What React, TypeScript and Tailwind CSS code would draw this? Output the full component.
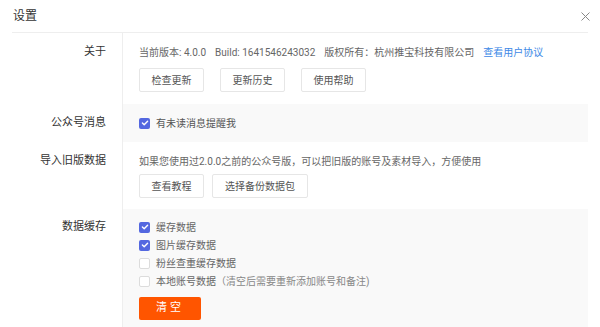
import React from "react";

const font = { fontFamily: "Roboto, 'Noto Sans CJK SC', sans-serif" };

function Check({ checked }: { checked?: boolean }) {
  return checked ? (
    <span className="flex h-[11px] w-[11px] items-center justify-center rounded-[2px] bg-[#5468e0]">
      <svg width="8" height="8" viewBox="0 0 8 8">
        <path d="M1.4 4.1 L3.2 5.8 L6.6 2.2" fill="none" stroke="white" strokeWidth="1.4" strokeLinecap="round" strokeLinejoin="round" />
      </svg>
    </span>
  ) : (
    <span className="h-[11px] w-[11px] rounded-[2px] border border-[#dcdcdc] bg-white" />
  );
}

function Btn({ children, w }: { children: React.ReactNode; w: string }) {
  return (
    <button className={`flex h-[24px] items-center justify-center rounded-[2px] border border-[#e6e6e6] bg-white text-[10px] text-[#555] ${w}`}>
      {children}
    </button>
  );
}

function Row({ label, gray, children, pt, pb }: { label: string; gray?: boolean; children: React.ReactNode; pt: string; pb: string }) {
  return (
    <div className="flex">
      <div className={`w-[110px] shrink-0 pr-[16px] text-right text-[11px] leading-[14px] text-[#333] ${pt}`}>{label}</div>
      <div className={`flex-1 border-l border-[#eeeeee] pl-[16px] ${pt} ${pb} ${gray ? "bg-[#f9f9f9]" : "bg-white"}`}>{children}</div>
    </div>
  );
}

export default function App() {
  return (
    <div className="h-[327px] w-[600px] overflow-hidden bg-white" style={font}>
      <div className="mx-[12px] flex h-[33px] items-center justify-between border-b border-[#eeeeee]">
        <span className="pl-[1px] text-[12px] text-[#333]">设置</span>
        <svg width="9" height="9" viewBox="0 0 9 9" className="mr-[-2px]">
          <path d="M0.5 0.5 L8.5 8.5 M8.5 0.5 L0.5 8.5" stroke="#888" strokeWidth="1" />
        </svg>
      </div>
      <div className="mx-[12px]">
        <Row label="关于" pt="pt-[12px]" pb="pb-[12px]">
          <div className="flex h-[14px] items-center gap-[9px] whitespace-nowrap text-[10px] text-[#666]">
            <span>当前版本: 4.0.0</span>
            <span>Build: 1641546243032</span>
            <span>版权所有：杭州推宝科技有限公司</span>
            <span className="text-[#3d88e6]">查看用户协议</span>
          </div>
          <div className="mt-[9px] flex gap-[16px]">
            <Btn w="w-[65px]">检查更新</Btn>
            <Btn w="w-[65px]">更新历史</Btn>
            <Btn w="w-[65px]">使用帮助</Btn>
          </div>
        </Row>
        <Row label="公众号消息" gray pt="pt-[12px]" pb="pb-[12px]">
          <div className="flex h-[14px] items-center gap-[6px] text-[10px] text-[#555]">
            <Check checked />
            <span>有未读消息提醒我</span>
          </div>
        </Row>
        <Row label="导入旧版数据" pt="pt-[12px]" pb="pb-[11px]">
          <div className="flex h-[14px] items-center whitespace-nowrap text-[10px] text-[#666]">
            如果您使用过2.0.0之前的公众号版，可以把旧版的账号及素材导入，方便使用
          </div>
          <div className="mt-[6px] flex gap-[8px]">
            <Btn w="w-[65px]">查看教程</Btn>
            <Btn w="w-[96px]">选择备份数据包</Btn>
          </div>
        </Row>
        <Row label="数据缓存" gray pt="pt-[11px]" pb="pb-[12px]">
          <div className="flex flex-col gap-[4px] text-[10px] text-[#666]">
            <div className="flex h-[14px] items-center gap-[6px]"><Check checked /><span>缓存数据</span></div>
            <div className="flex h-[14px] items-center gap-[6px]"><Check checked /><span>图片缓存数据</span></div>
            <div className="flex h-[14px] items-center gap-[6px]"><Check /><span>粉丝查重缓存数据</span></div>
            <div className="flex h-[14px] items-center gap-[6px]"><Check /><span>本地账号数据<span className="text-[#888]">（清空后需要重新添加账号和备注)</span></span></div>
          </div>
          <button className="mt-[9px] flex h-[23px] w-[62px] items-center justify-center rounded-[2px] bg-[#ff5500] text-[11px] tracking-[3px] text-white">
            清空
          </button>
        </Row>
      </div>
    </div>
  );
}
